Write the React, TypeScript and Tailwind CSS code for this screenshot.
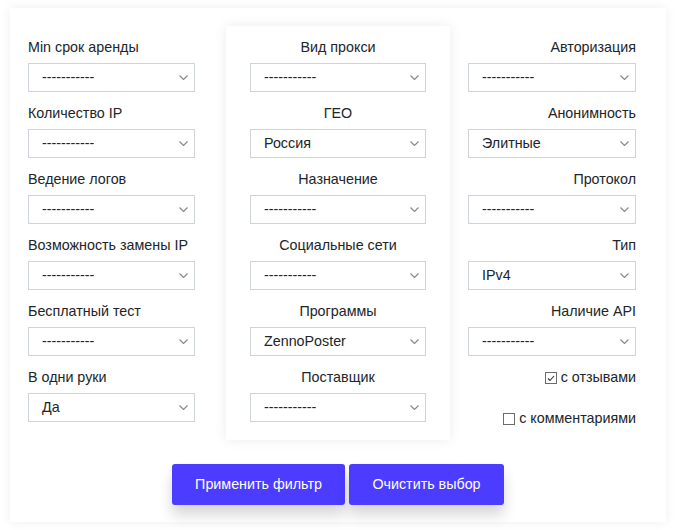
import React from 'react';

type Field = { label: string; value: string };

const left: Field[] = [
  { label: 'Min срок аренды', value: '-----------' },
  { label: 'Количество IP', value: '-----------' },
  { label: 'Ведение логов', value: '-----------' },
  { label: 'Возможность замены IP', value: '-----------' },
  { label: 'Бесплатный тест', value: '-----------' },
  { label: 'В одни руки', value: 'Да' },
];

const middle: Field[] = [
  { label: 'Вид прокси', value: '-----------' },
  { label: 'ГЕО', value: 'Россия' },
  { label: 'Назначение', value: '-----------' },
  { label: 'Социальные сети', value: '-----------' },
  { label: 'Программы', value: 'ZennoPoster' },
  { label: 'Поставщик', value: '-----------' },
];

const right: Field[] = [
  { label: 'Авторизация', value: '-----------' },
  { label: 'Анонимность', value: 'Элитные' },
  { label: 'Протокол', value: '-----------' },
  { label: 'Тип', value: 'IPv4' },
  { label: 'Наличие API', value: '-----------' },
];

const Select = ({ value }: { value: string }) => (
  <div className="h-[29px] border border-[#ced4da] bg-white flex items-center justify-between pl-[13px] pr-[6px]">
    <span>{value}</span>
    <svg width="9" height="5" viewBox="0 0 9 5" fill="none">
      <path d="M0.5 0.5l4 4 4-4" stroke="#8a8a8a" strokeWidth="1.2" />
    </svg>
  </div>
);

const Row = ({ field, align }: { field: Field; align: string }) => (
  <div className="mb-[11px]">
    <div className={`h-[20px] leading-[20px] mb-[6px] ${align}`}>{field.label}</div>
    <Select value={field.value} />
  </div>
);

const Checkbox = ({ checked, label }: { checked: boolean; label: string }) => (
  <div className="flex items-center justify-end gap-[4px] h-[20px]">
    <span className="w-[12px] h-[12px] border border-[#6b6b6b] flex items-center justify-center">
      {checked && (
        <svg width="8" height="7" viewBox="0 0 8 7" fill="none">
          <path d="M1 3.5l2 2 4-4.5" stroke="#333" strokeWidth="1.1" />
        </svg>
      )}
    </span>
    <span>{label}</span>
  </div>
);

export default function App() {
  return (
    <div className="bg-white min-h-[530px] pt-[8px] pl-[10px] font-['Liberation_Sans',Arial,sans-serif] text-[14.3px] text-[#212529]">
      <div className="w-[656px] bg-white shadow-[0_0_10px_rgba(0,0,0,0.07)] pt-[18px] pb-[17px]">
        <div className="flex pl-[18px]">
          <div className="w-[167px] pt-[11px]">
            {left.map((f, i) => (
              <Row key={i} field={f} align="text-left" />
            ))}
          </div>
          <div className="w-[224px] ml-[31px] px-[24px] pt-[11px] pb-[7px] bg-white shadow-[0_0_12px_rgba(0,0,0,0.08)]">
            {middle.map((f, i) => (
              <Row key={i} field={f} align="text-center" />
            ))}
          </div>
          <div className="w-[168px] ml-[18px] pt-[11px]">
            {right.map((f, i) => (
              <Row key={i} field={f} align="text-right" />
            ))}
            <div className="pt-[1px]">
              <Checkbox checked label="с отзывами" />
            </div>
            <div className="h-[21px]" />
            <Checkbox checked={false} label="с комментариями" />
          </div>
        </div>
        <div className="flex justify-center gap-[4px] mt-[24px]">
          <button className="w-[173px] h-[41px] rounded-[3px] bg-[#4b3cff] text-white shadow-[0_10px_14px_rgba(0,0,0,0.16)]">
            Применить фильтр
          </button>
          <button className="w-[155px] h-[41px] rounded-[3px] bg-[#4b3cff] text-white shadow-[0_10px_14px_rgba(0,0,0,0.16)]">
            Очистить выбор
          </button>
        </div>
      </div>
    </div>
  );
}
